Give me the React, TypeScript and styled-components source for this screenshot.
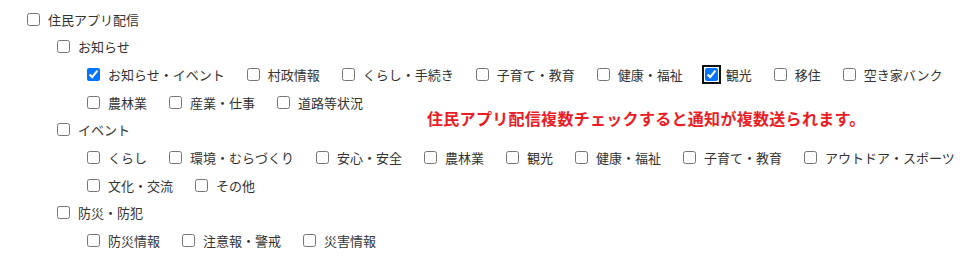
import React from "react";
import styled, { createGlobalStyle } from "styled-components";

const GlobalStyle = createGlobalStyle`
  body {
    margin: 0;
    background: #fff;
    font-family: "Noto Sans CJK JP", "Noto Sans", sans-serif;
    color: #333;
  }
`;

const Page = styled.div`
  position: relative;
  width: 975px;
  height: 256px;
  box-sizing: border-box;
  padding: 6px 0 0 27px;
  overflow: hidden;
`;

const Group = styled.div<{ $indent?: boolean }>`
  display: flex;
  flex-direction: column;
  margin-left: ${(p) => (p.$indent ? "30px" : "0")};
`;

const Row = styled.label<{ $h: number }>`
  display: flex;
  align-items: center;
  gap: 8px;
  height: ${(p) => p.$h}px;
  font-size: 13px;
  line-height: 1;
  white-space: nowrap;
`;

const ItemList = styled.div`
  display: flex;
  flex-wrap: wrap;
  column-gap: 22px;
  margin-left: 30px;
`;

const Box = styled.input.attrs({ type: "checkbox" })<{ $focused?: boolean }>`
  width: 13px;
  height: 13px;
  margin: 0;
  flex: none;
  accent-color: #0075ff;
  outline: ${(p) => (p.$focused ? "2px solid #101010" : "none")};
  outline-offset: 1px;
  border-radius: 2px;
`;

const Note = styled.div`
  position: absolute;
  left: 427px;
  top: 106px;
  font-size: 16px;
  font-weight: 700;
  letter-spacing: 0.3px;
  color: #ec1c24;
  white-space: nowrap;
`;

type Item = { label: string; checked?: boolean; focused?: boolean };

const notice: Item[] = [
  { label: "お知らせ・イベント", checked: true },
  { label: "村政情報" },
  { label: "くらし・手続き" },
  { label: "子育て・教育" },
  { label: "健康・福祉" },
  { label: "観光", checked: true, focused: true },
  { label: "移住" },
  { label: "空き家バンク" },
  { label: "農林業" },
  { label: "産業・仕事" },
  { label: "道路等状況" },
];

const events: Item[] = [
  { label: "くらし" },
  { label: "環境・むらづくり" },
  { label: "安心・安全" },
  { label: "農林業" },
  { label: "観光" },
  { label: "健康・福祉" },
  { label: "子育て・教育" },
  { label: "アウトドア・スポーツ" },
  { label: "文化・交流" },
  { label: "その他" },
];

const disaster: Item[] = [
  { label: "防災情報" },
  { label: "注意報・警戒" },
  { label: "災害情報" },
];

const Section = ({ title, items }: { title: string; items: Item[] }) => (
  <Group $indent>
    <Row $h={27}>
      <Box readOnly />
      {title}
    </Row>
    <ItemList>
      {items.map((it) => (
        <Row $h={28} key={it.label}>
          <Box readOnly defaultChecked={it.checked} $focused={it.focused} />
          {it.label}
        </Row>
      ))}
    </ItemList>
  </Group>
);

export default function App() {
  return (
    <>
      <GlobalStyle />
      <Page>
        <Group>
          <Row $h={27}>
            <Box readOnly />
            住民アプリ配信
          </Row>
          <Section title="お知らせ" items={notice} />
          <Section title="イベント" items={events} />
          <Section title="防災・防犯" items={disaster} />
        </Group>
        <Note>住民アプリ配信複数チェックすると通知が複数送られます。</Note>
      </Page>
    </>
  );
}
